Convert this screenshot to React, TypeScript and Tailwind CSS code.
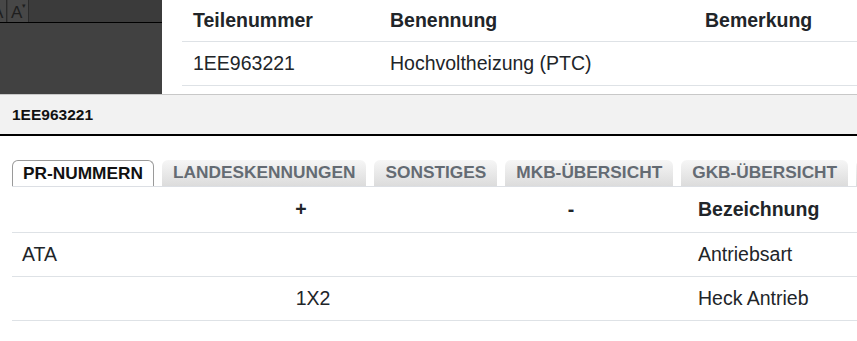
import React from "react";

const tabs = ["PR-NUMMERN", "LANDESKENNUNGEN", "SONSTIGES", "MKB-ÜBERSICHT", "GKB-ÜBERSICHT", "X"];

export default function App() {
  return (
    <div className="w-[857px] h-[341px] bg-white overflow-hidden font-['Liberation_Sans',Arial,sans-serif] text-[#212529]">
      {/* top area */}
      <div className="flex h-[94px]">
        <div className="w-[162px] shrink-0 bg-[#414141] flex flex-col">
          <div className="h-[23px] bg-[#3b3b3b] border-b border-black flex items-stretch">
            <div className="w-[7px] overflow-hidden bg-[#474747] border-r border-[#2a2a2a] relative">
              <span className="absolute left-[-8px] top-[4px] text-[17px] leading-none text-[#1e1e1e]">A</span>
            </div>
            <div className="w-[21px] ml-px bg-[#474747] border-r border-[#2a2a2a] relative">
              <span className="absolute left-[3px] top-[4px] text-[17px] leading-none text-[#1e1e1e]">A</span>
              <span className="absolute left-[14px] top-[2px] text-[7px] leading-none text-[#1e1e1e]">▾</span>
            </div>
          </div>
        </div>
        <div className="flex-1 pl-[20px]">
          <div className="grid grid-cols-[197px_315px_1fr] h-[42px] border-b border-[#dee2e6] items-center font-bold text-[19.5px] text-[#212529]">
            <div className="pl-[11px]">Teilenummer</div>
            <div className="pl-[11px]">Benennung</div>
            <div className="pl-[11px]">Bemerkung</div>
          </div>
          <div className="grid grid-cols-[197px_315px_1fr] h-[44px] border-b border-[#dee2e6] items-center text-[19.5px] text-[#212529]">
            <div className="pl-[11px]">1EE963221</div>
            <div className="pl-[11px]">Hochvoltheizung (PTC)</div>
            <div className="pl-[11px]"></div>
          </div>
        </div>
      </div>

      {/* gray bar */}
      <div className="h-[42px] bg-[#f2f2f2] border-t border-[#c8c8c8] border-b-2 border-b-black pl-[12px] flex items-center font-bold text-[15.5px] text-[#111]">
        1EE963221
      </div>

      {/* tabs */}
      <div className="mt-[24px] ml-[12px] flex items-end gap-[8px] border-b border-[#dcdfe4] h-[27px] overflow-hidden whitespace-nowrap">
        {tabs.map((t, i) =>
          i === 0 ? (
            <div
              key={t}
              className="h-[27px] -mb-px px-[10px] bg-white border border-b-0 border-[#9a9a9a] rounded-t-[6px] flex items-center font-bold text-[17.3px] text-[#111] shrink-0"
            >
              {t}
            </div>
          ) : (
            <div
              key={t}
              className="h-[26px] px-[11px] rounded-t-[6px] bg-gradient-to-b from-[#f6f6f6] to-[#dcdcdc] flex items-center font-bold text-[17.3px] text-[#646b73] shrink-0"
            >
              {t}
            </div>
          )
        )}
      </div>

      {/* lower table */}
      <div className="ml-[12px] text-[19.5px]">
        <div className="grid grid-cols-[136px_330px_210px_1fr] h-[46px] border-b border-[#dee2e6] items-center font-bold">
          <div></div>
          <div className="text-center pr-[24px]">+</div>
          <div className="text-center pr-[24px]">-</div>
          <div className="pl-[10px]">Bezeichnung</div>
        </div>
        <div className="grid grid-cols-[136px_330px_210px_1fr] h-[44px] border-b border-[#dee2e6] items-center">
          <div className="pl-[10px]">ATA</div>
          <div className="text-center"></div>
          <div className="text-center"></div>
          <div className="pl-[10px]">Antriebsart</div>
        </div>
        <div className="grid grid-cols-[136px_330px_210px_1fr] h-[44px] border-b border-[#dee2e6] items-center">
          <div className="pl-[10px]"></div>
          <div className="text-center">1X2</div>
          <div className="text-center"></div>
          <div className="pl-[10px]">Heck Antrieb</div>
        </div>
      </div>
    </div>
  );
}
